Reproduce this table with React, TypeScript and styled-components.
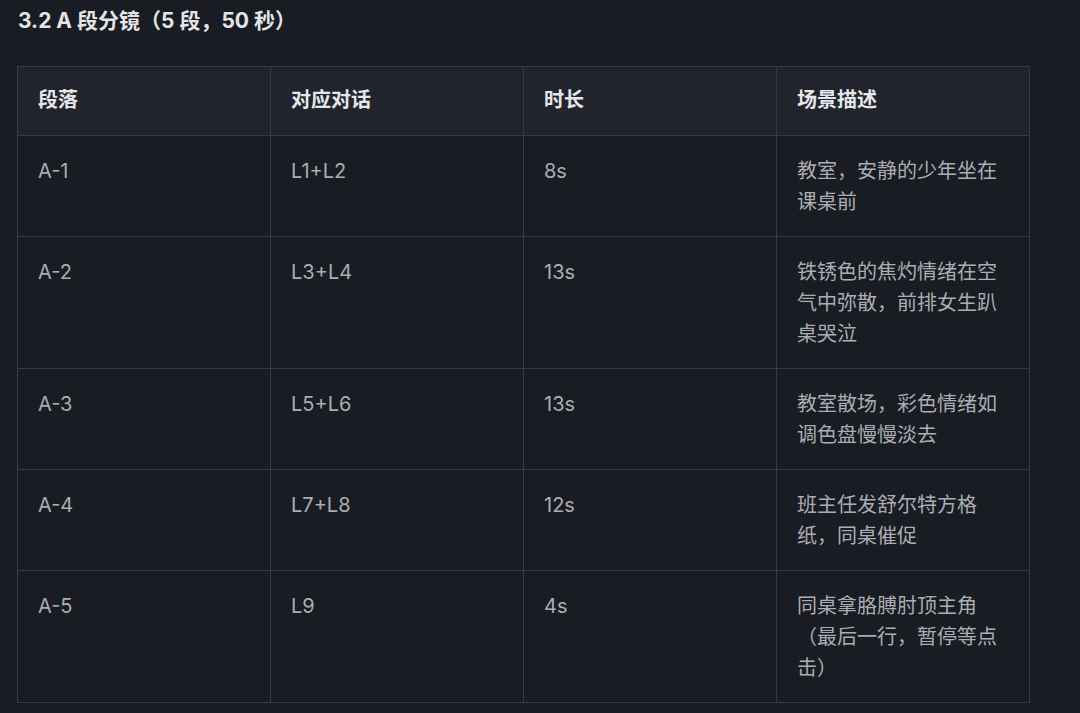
import styled, { createGlobalStyle } from 'styled-components';

const GlobalStyle = createGlobalStyle`
  html, body {
    margin: 0;
    padding: 0;
    background: #1a1c23;
  }
  body {
    font-family: Inter, "Noto Sans CJK SC", sans-serif;
  }
`;

type Row = {
  id: string;
  lines: string;
  duration: string;
  scene: string;
};

const rows: Row[] = [
  { id: 'A-1', lines: 'L1+L2', duration: '8s', scene: '教室，安静的少年坐在课桌前' },
  { id: 'A-2', lines: 'L3+L4', duration: '13s', scene: '铁锈色的焦灼情绪在空气中弥散，前排女生趴桌哭泣' },
  { id: 'A-3', lines: 'L5+L6', duration: '13s', scene: '教室散场，彩色情绪如调色盘慢慢淡去' },
  { id: 'A-4', lines: 'L7+L8', duration: '12s', scene: '班主任发舒尔特方格纸，同桌催促' },
  { id: 'A-5', lines: 'L9', duration: '4s', scene: '同桌拿胳膊肘顶主角（最后一行，暂停等点击）' },
];

const headers = ['段落', '对应对话', '时长', '场景描述'];

export default function App() {
  return (
    <>
      <GlobalStyle />
      <Page>
        <Title>3.2 A 段分镜（5 段，50 秒）</Title>
        <Table>
          <colgroup>
            {headers.map((h) => (
              <col key={h} style={{ width: '25%' }} />
            ))}
          </colgroup>
          <thead>
            <tr>
              {headers.map((h) => (
                <HeadCell key={h}>{h}</HeadCell>
              ))}
            </tr>
          </thead>
          <tbody>
            {rows.map((r) => (
              <tr key={r.id}>
                <Cell>{r.id}</Cell>
                <Cell>{r.lines}</Cell>
                <Cell>{r.duration}</Cell>
                <Cell>{r.scene}</Cell>
              </tr>
            ))}
          </tbody>
        </Table>
      </Page>
    </>
  );
}

const Page = styled.div`
  display: flex;
  flex-direction: column;
  gap: 33px;
  padding: 9px 0 0 17px;
  min-height: 713px;
  box-sizing: border-box;
`;

const Title = styled.h3`
  margin: 0 0 0 1px;
  font-size: 21px;
  line-height: 24px;
  font-weight: 700;
  color: #e4e5e8;
`;

const Table = styled.table`
  width: 1013px;
  border-collapse: collapse;
  table-layout: fixed;
  border: 1px solid #363a43;
`;

const HeadCell = styled.th`
  text-align: left;
  padding: 18px 20px 19px;
  font-size: 20px;
  line-height: 31px;
  font-weight: 700;
  color: #e6e7ea;
  background: #21242c;
  border: 1px solid #363a43;
`;

const Cell = styled.td`
  vertical-align: top;
  padding: 20px 20px 18px;
  font-size: 20px;
  line-height: 31px;
  color: #aaadb3;
  background: #1a1c23;
  border: 1px solid #363a43;
`;
